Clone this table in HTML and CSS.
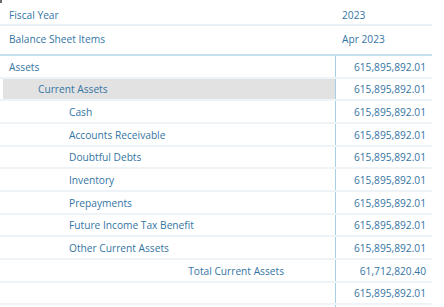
FILE: index.html
```html
<!DOCTYPE html>
<html>
<head>
<meta charset="utf-8">
<link rel="stylesheet" href="styles.css">
</head>
<body>
<div class="matrix">
  <div class="row hdr hdr1"><div class="c1">Fiscal Year</div><div class="c2">2023</div></div>
  <div class="row hdr hdr2"><div class="c1">Balance Sheet Items</div><div class="c2">Apr 2023</div></div>
  <div class="row"><div class="c1 l0">Assets</div><div class="c2">615,895,892.01</div></div>
  <div class="row sel"><div class="c1 l1">Current Assets</div><div class="c2">615,895,892.01</div></div>
  <div class="row"><div class="c1 l2">Cash</div><div class="c2">615,895,892.01</div></div>
  <div class="row"><div class="c1 l2">Accounts Receivable</div><div class="c2">615,895,892.01</div></div>
  <div class="row"><div class="c1 l2">Doubtful Debts</div><div class="c2">615,895,892.01</div></div>
  <div class="row"><div class="c1 l2">Inventory</div><div class="c2">615,895,892.01</div></div>
  <div class="row"><div class="c1 l2">Prepayments</div><div class="c2">615,895,892.01</div></div>
  <div class="row"><div class="c1 l2">Future Income Tax Benefit</div><div class="c2">615,895,892.01</div></div>
  <div class="row"><div class="c1 l2">Other Current Assets</div><div class="c2">615,895,892.01</div></div>
  <div class="row"><div class="c1 total">Total Current Assets</div><div class="c2">61,712,820.40</div></div>
  <div class="row"><div class="c1"></div><div class="c2">615,895,892.01</div></div>
  <div class="row tail"><div class="c1"></div><div class="c2"></div></div>
</div>
</body>
</html>
```
FILE: styles.css
```css
html, body {
  margin: 0;
  padding: 0;
  background: #ffffff;
  overflow: hidden;
}
body {
  font-family: "Open Sans", "DejaVu Sans", sans-serif;
  font-size: 10.2px;
  color: #3575a3;
}
.matrix {
  position: relative;
  width: 432px;
  height: 307px;
  overflow: hidden;
}
.matrix::before {
  content: "";
  position: absolute;
  left: 0;
  top: 0;
  width: 2px;
  height: 3px;
  background: #6b6b6b;
}
.row {
  display: grid;
  grid-template-columns: 335px 97px;
  box-sizing: border-box;
  height: 22.667px;
  border-bottom: 2px solid #eef3f7;
  white-space: nowrap;
}
.row > div {
  display: flex;
  align-items: center;
  box-sizing: border-box;
  padding-top: 1px;
}
.c2 {
  justify-content: flex-end;
  padding-right: 6px;
  border-left: 1px solid #a6cee5;
}
.hdr .c2 {
  justify-content: flex-start;
  padding-left: 6px;
  border-left: 1px solid transparent;
}
.hdr .c1 {
  padding-left: 9px;
}
.hdr1 {
  height: 26px;
  padding-top: 4px;
  border-bottom: 2px solid #e8f0f5;
}
.hdr2 {
  height: 30px;
  padding-top: 1px;
  padding-bottom: 5px;
  border-bottom: 2px solid #c6dfee;
}
.l0 { padding-left: 9px; }
.l1 { padding-left: 38px; }
.l2 { padding-left: 69px; }
.total {
  justify-content: flex-end;
  padding-right: 51px;
}
.sel .c1 {
  background: linear-gradient(to right, transparent 3px, #e2e2e2 3px);
}
.tail {
  border-bottom: none;
}
```
